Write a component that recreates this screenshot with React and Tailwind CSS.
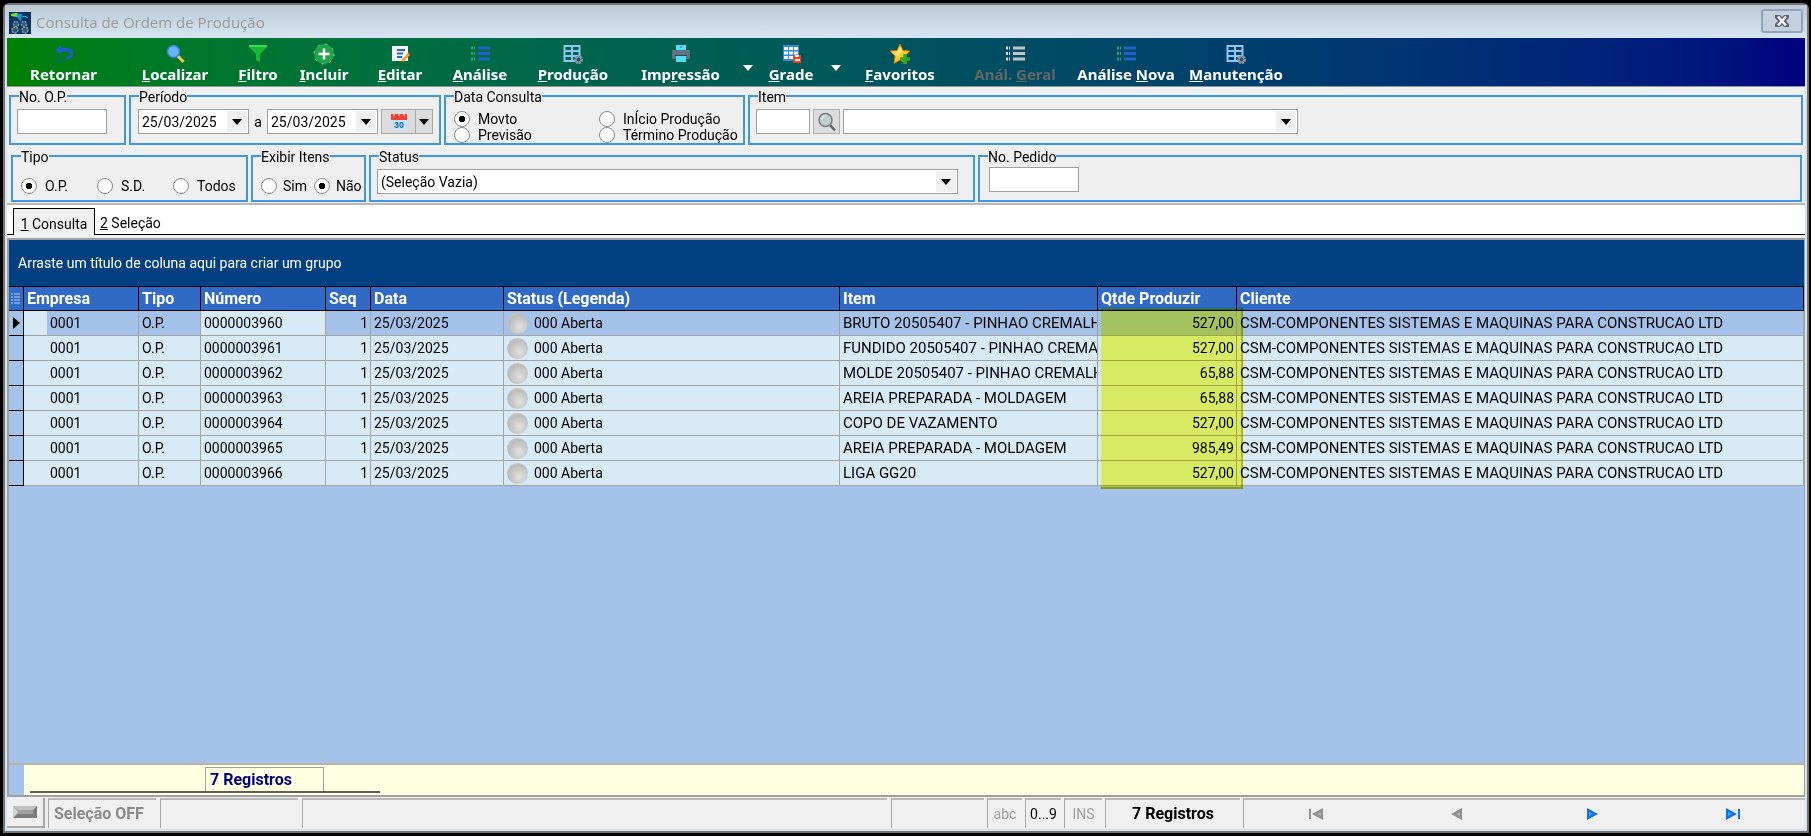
import React from "react";

const SANS = "font-['Roboto','Liberation_Sans',sans-serif]";

const IconReturn = () => (
  <svg width="20" height="20" viewBox="0 0 20 20">
    <path d="M1 6 7 1v3h6c4 0 6 2 6 5.500S17 15 13 15h-1v-3h1c2 0 3-1 3-2.500S15 8 13 8H7v3z" fill="#1b62c4" />
    <path d="M2 13v5M5 13v5M8 13v5M11 15v3" stroke="#1d4fae" strokeWidth="1" strokeDasharray="2 1" />
  </svg>
);

const IconSearch = () => (
  <svg width="20" height="20" viewBox="0 0 20 20">
    <path d="m13 12 5.500 6" stroke="#f3c94b" strokeWidth="3" />
    <path d="m12 12 2 2" stroke="#c9ced6" strokeWidth="2" />
    <circle cx="8.500" cy="7.500" r="6" fill="#66b5fa" stroke="#3a7fd0" strokeWidth="1.500" />
  </svg>
);

const IconFilter = () => (
  <svg width="20" height="20" viewBox="0 0 20 20">
    <path d="M1 1h18v2l-7 7v8l-4-2v-6L1 3z" fill="#18b835" />
    <path d="M1 1h18v2H1z" fill="#43d65a" />
  </svg>
);

const IconAdd = () => (
  <svg width="22" height="22" viewBox="0 0 22 22">
    <circle cx="11" cy="11" r="10" fill="#21a34a" />
    <circle cx="11" cy="11" r="10" fill="none" stroke="#a9dcb8" strokeWidth="1" strokeDasharray="2 6" />
    <path d="M11 5.500v11M5.500 11h11" stroke="#fff" strokeWidth="2.500" />
  </svg>
);

const IconEdit = () => (
  <svg width="20" height="20" viewBox="0 0 20 20">
    <path d="M2 2h16v15H2z" fill="#f3f6fb" />
    <path d="M7 6h8M7 9.500h6M7 13h5" stroke="#2b64cc" strokeWidth="2" />
    <path d="m11 17 7-8 2 2-7 7z" fill="#f59a23" />
    <path d="m18 9 1-1 1.500 1.500L19.500 11z" fill="#e0452f" />
  </svg>
);

const IconList = ({ dots = "#22a86a", lines = "#2063c8" }) => (
  <svg width="20" height="20" viewBox="0 0 20 20">
    <path d="M1 4h4M1 9.500h4M1 15h4" stroke={dots} strokeWidth="3" strokeDasharray="2 1" />
    <path d="M8 4h12M8 9.500h12M8 15h12" stroke={lines} strokeWidth="3" />
  </svg>
);

const IconTableGear = () => (
  <svg width="20" height="20" viewBox="0 0 20 20">
    <path d="M1.500 2h15v15h-15zM1.500 7h15M1.500 12h15M9 2v15" fill="none" stroke="#8ec5f5" strokeWidth="2" />
    <circle cx="15.500" cy="15.500" r="3.500" fill="#33505e" stroke="#90a4ae" strokeWidth="2" strokeDasharray="2 1" />
    <circle cx="15.500" cy="15.500" r="2.500" fill="none" stroke="#90a4ae" strokeWidth="1" />
  </svg>
);

const IconPrinter = () => (
  <svg width="20" height="20" viewBox="0 0 20 20">
    <path d="M5 1h10v6H5z" fill="#4fe0f5" />
    <rect x="1" y="6" width="18" height="9" rx="1" fill="#5f7483" />
    <path d="M5 12h10v6H5z" fill="#4fe0f5" />
    <path d="M4 11h12v1H4z" fill="#33444f" />
    <circle cx="10" cy="3" r="1" fill="#b04fe8" />
  </svg>
);

const IconGridSave = () => (
  <svg width="20" height="20" viewBox="0 0 20 20">
    <path d="M2 1h16v16H2z" fill="#2a8be0" />
    <path d="M3 3h4v3H3zM8 3h4v3H8zM13 3h4v3h-4zM3 7.500h4v3H3zM8 7.500h4v3H8zM13 7.500h4v3h-4zM3 12h4v3H3zM8 12h4v3H8z" fill="#fff" />
    <path d="M12 11h8v8h-8z" fill="#f0401e" />
    <path d="M14 11h4v2h-4zM14 15h5v2h-5z" fill="#ffe0d5" />
  </svg>
);

const IconStar = () => (
  <svg width="22" height="22" viewBox="0 0 22 22">
    <path d="m11 1 3 6.500 7 .5-5 5 1.500 7.500L11 17l-6 3.500L6 13 1 8l7-.5z" fill="#fcc92c" stroke="#c47a0a" strokeWidth="1" />
    <path d="m11 3 2 5-4 5-5-4.500 5-.5z" fill="#ffe77c" />
    <path d="M16 11v10M11 16h10" stroke="#2fa826" strokeWidth="3.500" />
  </svg>
);

const IconCalendar = () => (
  <svg width="18" height="18" viewBox="0 0 18 18">
    <path d="M1 2h16v15H1z" fill="#c5e4fb" />
    <path d="M1 1h16v6H1z" fill="#ea4335" />
    <path d="M4 0v3M9 0v3M14 0v3" stroke="#fbd3ce" strokeWidth="1" />
    <text x="9" y="15" textAnchor="middle" fontSize="9" fontWeight="700" fontFamily="Liberation Sans, sans-serif" fill="#1867c9">
      30
    </text>
  </svg>
);

const IconLens = () => (
  <svg width="20" height="20" viewBox="0 0 20 20">
    <path d="m13 13 5 5.500" stroke="#5d6663" strokeWidth="2.500" />
    <circle cx="8.500" cy="8" r="6.500" fill="#bdd1cc" stroke="#75827f" strokeWidth="1.500" />
    <path d="M4.500 7c1-2 2-3 4-3" stroke="#e4efec" strokeWidth="1.500" fill="none" />
  </svg>
);

const AppLogo = () => (
  <svg width="22" height="22" viewBox="0 0 22 22">
    <path d="M0 0h22v22H0z" fill="#06355f" />
    <path d="M2 2q5-2 8 0l-2 3-6-1z" fill="#7bdc2c" />
    <path d="M8 2h5l-1 8-4-5z" fill="#1495e6" />
    <path d="M13 5q3-2 6 1" stroke="#7c9cb8" fill="none" />
    <g fill="#34566f" stroke="#7f9aae" strokeWidth="1.500">
      <circle cx="7" cy="12" r="2.500" strokeDasharray="2 1" />
      <circle cx="15" cy="12" r="2.500" strokeDasharray="2 1" />
      <circle cx="6" cy="18" r="3" strokeDasharray="2 1" />
      <circle cx="16" cy="18" r="3" strokeDasharray="2 1" />
    </g>
    <path d="M10 15h2v6h-2z" fill="#06355f" />
  </svg>
);

const Arrow = ({ className = "fill-black" }) => (
  <svg width="10" height="6" viewBox="0 0 10 6" className={className}>
    <path d="M0 0h10L5 6z" />
  </svg>
);

const tools = [
  { pre: "Retornar", icon: <IconReturn />, width: "w-[113px]" },
  { key: "L", post: "ocalizar", icon: <IconSearch />, width: "w-[110px]" },
  { key: "F", post: "iltro", icon: <IconFilter />, width: "w-14" },
  { key: "I", post: "ncluir", icon: <IconAdd />, width: "w-[76px]" },
  { key: "E", post: "ditar", icon: <IconEdit />, width: "w-[76px]" },
  { key: "A", post: "nálise", icon: <IconList />, width: "w-[84px]" },
  { key: "P", post: "rodução", icon: <IconTableGear />, width: "w-[102px]" },
  { pre: "Imp", key: "r", post: "essão", icon: <IconPrinter />, width: "w-[113px]" },
  { menu: "Opções de impressão", width: "w-[22px]" },
  { key: "G", post: "rade", icon: <IconGridSave />, width: "w-16" },
  { menu: "Opções de grade", width: "w-[26px]" },
  { key: "F", post: "avoritos", icon: <IconStar />, width: "w-[102px]" },
  { pre: "Anál. ", key: "G", post: "eral", icon: <IconList dots="#dcdcdc" lines="#c4c4c4" />, width: "w-32", disabled: true },
  { pre: "Análise ", key: "N", post: "ova", icon: <IconList />, width: "w-[94px]" },
  { key: "M", post: "anutenção", icon: <IconTableGear />, width: "w-[126px]" },
];

const CLIENT = "CSM-COMPONENTES SISTEMAS E MAQUINAS PARA CONSTRUCAO LTD";

const orders = [
  { numero: "0000003960", item: "BRUTO 20505407 - PINHAO CREMALH", qtde: "527,00" },
  { numero: "0000003961", item: "FUNDIDO 20505407 - PINHAO CREMA", qtde: "527,00" },
  { numero: "0000003962", item: "MOLDE 20505407 - PINHAO CREMALH", qtde: "65,88" },
  { numero: "0000003963", item: "AREIA PREPARADA - MOLDAGEM", qtde: "65,88" },
  { numero: "0000003964", item: "COPO DE VAZAMENTO", qtde: "527,00" },
  { numero: "0000003965", item: "AREIA PREPARADA - MOLDAGEM", qtde: "985,49" },
  { numero: "0000003966", item: "LIGA GG20", qtde: "527,00" },
];

const columns = ["Empresa", "Tipo", "Número", "Seq", "Data", "Status (Legenda)", "Item", "Qtde Produzir", "Cliente"];

const Group = ({ title, className, children }) => (
  <fieldset className={`min-w-0 border-2 border-[#3f97e0] ${className}`}>
    <legend className="ml-2 h-4 text-sm leading-[18px] whitespace-nowrap">{title}</legend>
    {children}
  </fieldset>
);

const Combo = ({ label, value, className }) => (
  <div className={`relative h-[25px] ${className}`}>
    <select aria-label={label} defaultValue={value} className="h-full w-full appearance-none border border-[#a0a0a0] bg-white pl-[3px] text-sm">
      <option>{value}</option>
    </select>
    <span className="pointer-events-none absolute top-[2px] right-[2px] flex h-[21px] w-5 items-center justify-center bg-[#f0f0f0]">
      <Arrow />
    </span>
  </div>
);

const Radio = ({ name, label, checked, className = "", gap = "gap-2" }) => (
  <label className={`flex h-4 items-center text-sm leading-4 whitespace-nowrap ${gap} ${className}`}>
    <input
      type="radio"
      name={name}
      defaultChecked={checked}
      className="size-4 shrink-0 appearance-none rounded-full border border-[#8a8a8a] bg-white checked:bg-[radial-gradient(circle,#000_3px,#fff_3px)]"
    />
    {label}
  </label>
);

const TextBox = ({ label, className }) => (
  <input type="text" aria-label={label} className={`h-[25px] border border-[#a0a0a0] bg-white px-1 text-sm ${className}`} />
);

const Panel = ({ className = "", children }) => (
  <div className={`flex h-[30px] items-center border-t-2 border-l border-t-[#b8b8b8] border-l-[#a8a8a8] ${className}`}>{children}</div>
);

const NavButton = ({ label, disabled, flip, bar }) => (
  <button type="button" aria-label={label} disabled={disabled} className="flex h-full flex-1 items-center justify-center">
    <svg width="16" height="12" viewBox="0 0 16 12" className={flip ? "-scale-x-100" : ""}>
      <path d="M1 0 12 6 1 12z" fill={disabled ? "#909090" : "#1272dc"} />
      <path d="M3 4 7 6 3 8z" fill={disabled ? "#b4b4b4" : "#4ba0f4"} />
      {bar && <path d="M13 1h2v10h-2z" fill={disabled ? "#909090" : "#1272dc"} />}
    </svg>
  </button>
);

const TitleBar = () => (
  <header className="flex h-[33px] shrink-0 items-center bg-linear-to-b from-[#bccad8] to-[#d7e4f2] px-1 pt-[2px]">
    <AppLogo />
    <h1 className="ml-[5px] font-['Open_Sans',sans-serif] text-[15px] text-[#9a9a9a]">Consulta de Ordem de Produção</h1>
    <button type="button" aria-label="Fechar" className="mb-[3px] ml-auto flex h-6 w-[42px] items-center justify-center rounded-[3px] border-2 border-[#94a3bd] bg-[#c3d1e1]">
      <svg width="16" height="12" viewBox="0 0 16 12">
        <path d="M1 0h5l2 2 2-2h5v3l-3 3 3 3v3h-5l-2-2-2 2H1V9l3-3-3-3z" fill="#5b6577" />
        <path d="m4 1.500 8 9M12 1.500l-8 9" stroke="#f4f6f9" strokeWidth="2.500" />
      </svg>
    </button>
  </header>
);

const Toolbar = () => (
  <nav className="flex h-[49px] shrink-0 border-b border-[#8a9a94] bg-linear-to-r from-[#008000] to-[#000080] font-['Noto_Sans',sans-serif] text-[15px] font-bold text-white">
    {tools.map((tool, index) =>
      tool.menu ? (
        <button key={index} type="button" aria-label={tool.menu} className={`flex shrink-0 items-center justify-center pt-4 pb-1 ${tool.width}`}>
          <Arrow className="fill-white" />
        </button>
      ) : (
        <button
          key={index}
          type="button"
          disabled={tool.disabled}
          className={`flex shrink-0 flex-col items-center pt-[5px] disabled:text-[#666] ${tool.width}`}
        >
          <span className="flex h-[22px] items-center">{tool.icon}</span>
          <span className="leading-[18px] whitespace-pre">
            {tool.pre}
            {tool.key && <u>{tool.key}</u>}
            {tool.post}
          </span>
        </button>
      )
    )}
  </nav>
);

const Filters = () => (
  <form className="shrink-0 border-b-2 border-[#b8b8b8] bg-[#efefef] pt-px pb-px">
    <div className="flex gap-[3px] px-[2px]">
      <Group title="No. O.P." className="h-[57px] w-[117px]">
        <TextBox label="No. O.P." className="mt-[5px] ml-[6px] w-[90px]" />
      </Group>
      <Group title="Período" className="h-[57px] w-[312px]">
        <div className="flex items-center pt-[5px] pl-[7px]">
          <Combo label="Data inicial" value="25/03/2025" className="w-[111px]" />
          <span className="w-[18px] text-center text-sm">a</span>
          <Combo label="Data final" value="25/03/2025" className="w-[111px]" />
          <button type="button" aria-label="Calendário" className="ml-[3px] flex h-[25px] w-[35px] items-center justify-center border border-[#a8a8a8] bg-[#dcdcdc]">
            <IconCalendar />
          </button>
          <button type="button" aria-label="Períodos" className="flex h-[25px] w-[17px] items-center justify-center border border-l-0 border-[#a8a8a8] bg-[#dcdcdc]">
            <Arrow />
          </button>
        </div>
      </Group>
      <Group title="Data Consulta" className="h-[57px] w-[301px]">
        <div className="grid grid-cols-[145px_auto] pt-[7px] pl-2">
          <Radio name="data" label="Movto" checked />
          <Radio name="data" label="InÍcio Produção" />
          <Radio name="data" label="Previsão" />
          <Radio name="data" label="Término Produção" />
        </div>
      </Group>
      <Group title="Item" className="h-[57px] flex-1">
        <div className="flex pt-[5px] pl-[6px]">
          <TextBox label="Código do item" className="w-[54px]" />
          <button type="button" aria-label="Pesquisar item" className="ml-[3px] flex h-[25px] w-[27px] items-center justify-center border border-[#b0b0b0] bg-[#dcdcdc]">
            <IconLens />
          </button>
          <Combo label="Item" value="" className="ml-[3px] w-[455px]" />
        </div>
      </Group>
    </div>
    <div className="mt-[3px] flex gap-[3px] pr-[3px] pl-1">
      <Group title="Tipo" className="h-[54px] w-[237px]">
        <div className="flex pt-[14px] pl-2">
          <Radio name="tipo" label="O.P." checked className="w-[76px]" />
          <Radio name="tipo" label="S.D." className="w-[76px]" />
          <Radio name="tipo" label="Todos" />
        </div>
      </Group>
      <Group title="Exibir Itens" className="h-[54px] w-[115px]">
        <div className="flex pt-[14px] pl-2">
          <Radio name="exibir" label="Sim" className="w-[53px]" gap="gap-[6px]" />
          <Radio name="exibir" label="Não" checked gap="gap-[6px]" />
        </div>
      </Group>
      <Group title="Status" className="h-[54px] w-[606px]">
        <Combo label="Status" value="(Seleção Vazia)" className="mt-[5px] ml-[6px] w-[581px]" />
      </Group>
      <Group title="No. Pedido" className="h-[54px] flex-1">
        <TextBox label="No. Pedido" className="mt-[3px] ml-[9px] w-[90px]" />
      </Group>
    </div>
  </form>
);

const Tabs = () => (
  <div role="tablist" className="flex h-[30px] shrink-0 items-end bg-white text-sm">
    <span className="w-[6px] self-stretch border-b border-black" />
    <button type="button" role="tab" aria-selected="true" className="h-[27px] w-[82px] border border-b-0 border-black bg-[#f0f0f0] pt-[3px]">
      <u>1</u> Consulta
    </button>
    <div className="flex-1 self-stretch border-b border-black pt-[3px] pl-[5px]">
      <button type="button" role="tab" aria-selected="false" className="h-[26px] pt-[3px]">
        <u>2</u> Seleção
      </button>
    </div>
  </div>
);

const Orders = () => (
  <div className="relative">
    <table className="w-full table-fixed border-separate border-spacing-0 text-sm leading-4">
      <colgroup>
        <col className="w-[15px]" />
        <col className="w-[115px]" />
        <col className="w-[62px]" />
        <col className="w-[125px]" />
        <col className="w-[45px]" />
        <col className="w-[133px]" />
        <col className="w-[336px]" />
        <col className="w-[258px]" />
        <col className="w-[139px]" />
        <col />
      </colgroup>
      <thead>
        <tr className="h-[25px] bg-[#316ac5] text-left text-base leading-5 text-white">
          <th className="border-y border-r border-black p-0">
            <svg width="10" height="12" viewBox="0 0 10 12" className="mx-auto">
              <path d="M0 1h2M0 4h2M0 7h2M0 10h2M3 1h6M3 4h6M3 7h6M3 10h6" stroke="#b4cdf2" />
            </svg>
          </th>
          {columns.map((column) => (
            <th key={column} className="border-y border-r border-black py-0 pr-0 pl-[3px] font-bold whitespace-nowrap">
              {column}
            </th>
          ))}
        </tr>
      </thead>
      <tbody>
        {orders.map((order, index) => {
          const active = index === 0;
          const cell = "overflow-hidden border-r border-b border-[#a3a3a3] py-0 pl-[3px] pr-[2px] whitespace-nowrap";
          return (
            <tr key={order.numero} className={`h-[25px] ${active ? "bg-[#a4c2ea]" : "bg-[#d8eaf6]"}`}>
              <td className="border-r border-b border-black bg-[#a4c2ea] p-0">
                {active && (
                  <svg width="7" height="12" viewBox="0 0 7 12" className="ml-1">
                    <path d="M0 0 7 6 0 12z" />
                  </svg>
                )}
              </td>
              <td className={`border-r border-b border-[#a3a3a3] py-0 pl-[26px] ${active ? "bg-[linear-gradient(to_right,#d8eaf6_23px,#a4c2ea_23px)]" : ""}`}>0001</td>
              <td className={cell}>O.P.</td>
              <td className={`${cell} bg-[#d8eaf6]`}>{order.numero}</td>
              <td className={`${cell} text-right`}>1</td>
              <td className={cell}>25/03/2025</td>
              <td className={cell}>
                <div className="flex items-center gap-[6px]">
                  <span className="size-[21px] rounded-full bg-[radial-gradient(circle_at_60%_65%,#e2e2e2,#bcbcbc_60%,#cfcfcf)]" />
                  000 Aberta
                </div>
              </td>
              <td className={`${cell} text-[15px]`}>{order.item}</td>
              <td className={`${cell} text-right`}>{order.qtde}</td>
              <td className={`${cell} text-[15px]`}>{CLIENT}</td>
            </tr>
          );
        })}
      </tbody>
    </table>
    {/* marker over the quantity column */}
    <div className="pointer-events-none absolute top-[22px] -bottom-[3px] left-[1092px] w-[142px] border-r-2 border-b-2 border-[#d6c820] bg-[#ffff66] mix-blend-multiply" />
  </div>
);

const StatusBar = () => (
  <footer className="flex h-8 shrink-0 items-center bg-[#f0f0f0] text-sm">
    <button type="button" aria-label="Alternar seleção" className="mr-[3px] flex h-[30px] w-[38px] items-center justify-center border-r-2 border-b-2 border-[#a8a8a8]">
      <svg width="24" height="12" viewBox="0 0 24 12">
        <path d="M0 0h24v12H0z" fill="#a0a0a0" />
        <path d="M0 0h24l-4 4H5z" fill="#c2c2c2" />
        <path d="M0 12h24V0l-4 4v4H5z" fill="#7c7c7c" />
        <path d="m0 0 5 6-5 6z" fill="#d2d2d2" />
      </svg>
    </button>
    <Panel className="mr-1 w-[108px] pl-[5px] text-base font-bold whitespace-nowrap text-[#8a8a8a]">Seleção OFF</Panel>
    <Panel className="mr-1 w-[138px]" />
    <Panel className="mr-1 w-[585px]" />
    <Panel className="mr-[3px] w-[93px]" />
    <Panel className="mr-[3px] w-[35px] justify-center text-[#a0a0a0]">abc</Panel>
    <Panel className="mr-[3px] w-9 justify-center">0...9</Panel>
    <Panel className="mr-[3px] w-[38px] justify-center text-[#a0a0a0]">INS</Panel>
    <Panel className="mr-[3px] w-[135px] justify-center text-base font-bold">7 Registros</Panel>
    <Panel className="flex-1 px-[3px]">
      <NavButton label="Primeiro" disabled flip bar />
      <NavButton label="Anterior" disabled flip />
      <NavButton label="Próximo" />
      <NavButton label="Último" bar />
    </Panel>
  </footer>
);

const App = () => {
  return (
    <div className={`h-screen min-h-[560px] bg-black pt-[3px] pr-[2px] pb-[3px] pl-[3px] text-black ${SANS}`}>
      <div className="flex h-full flex-col rounded-t-md border-2 border-[#757575] bg-[#d7e4f2]">
        <TitleBar />
        <main className="mx-[2px] mb-[2px] flex min-h-0 flex-1 flex-col overflow-hidden bg-[#f0f0f0]">
          <Toolbar />
          <Filters />
          <Tabs />
          <section className="mt-[3px] flex min-h-0 flex-1 flex-col border-2 border-r border-[#a0a0a0] bg-[#a4c2ea]">
            <p className="flex h-[46px] shrink-0 items-center bg-[#004080] pl-[9px] text-sm text-white">
              Arraste um título de coluna aqui para criar um grupo
            </p>
            <Orders />
            <div className="mt-auto flex h-8 shrink-0 border-t-2 border-[#b4b4a8]">
              <span className="w-[15px]" />
              <div className="flex-1 bg-[#ffffe1] pt-[2px] pl-[6px]">
                <div className="w-[350px] border-b-2 border-[#5f5f54] pl-[175px]">
                  <div className="h-6 w-[119px] border border-b-0 border-[#a0a0a0] pl-1 text-base leading-6 font-bold text-[#000080]">7 Registros</div>
                </div>
              </div>
            </div>
          </section>
          <StatusBar />
        </main>
      </div>
    </div>
  );
};

export default App;
